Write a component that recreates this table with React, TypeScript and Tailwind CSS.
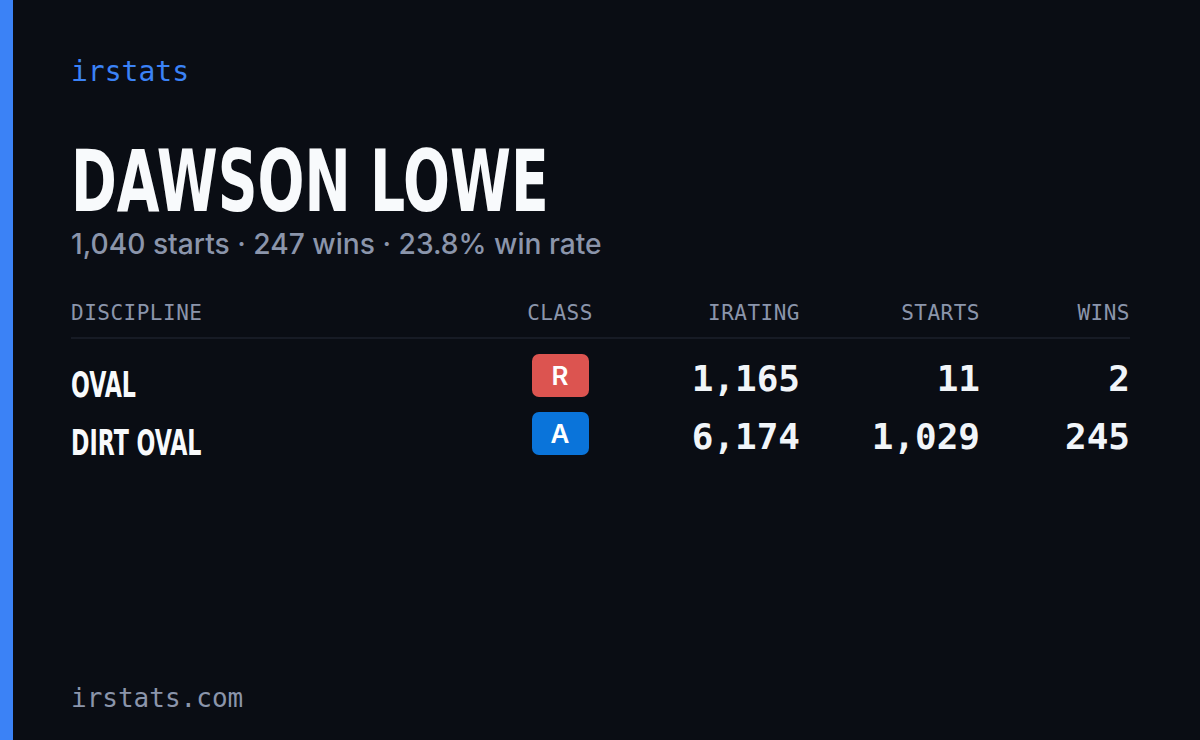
const rows = [
  { discipline: "OVAL", cls: "R", irating: "1,165", starts: "11", wins: "2" },
  { discipline: "DIRT OVAL", cls: "A", irating: "6,174", starts: "1,029", wins: "245" },
];

const mono = "font-['DejaVu_Sans_Mono','Liberation_Mono',monospace]";
const condensed = "font-['DejaVu_Sans_Condensed','DejaVu_Sans',sans-serif]";

function ClassBadge({ cls }: { cls: string }) {
  const color = cls === "R" ? "bg-[#dc5450]" : "bg-[#0a74da]";
  return (
    <div
      className={`flex h-[43px] w-[57px] items-center justify-center rounded-[7px] ${color} font-['Inter',sans-serif] text-[26px] font-semibold text-white`}
    >
      {cls}
    </div>
  );
}

export default function App() {
  return (
    <div className="flex h-[740px] w-[1200px] bg-[#0a0d14] text-white">
      {/* accent bar */}
      <div className="w-[13px] bg-[#3b82f6]" />

      <div className="flex flex-1 flex-col pl-[58px] pr-[70px]">
        <div className={`mt-[56px] ${mono} text-[28px] leading-[32px] text-[#3b82f6]`}>irstats</div>

        <h1
          className={`mt-[53px] origin-left scale-x-[0.714] whitespace-nowrap ${condensed} text-[86px] font-bold leading-[80px] text-[#f8fafc]`}
        >
          DAWSON LOWE
        </h1>
        <p className="mt-[5px] font-['Inter',sans-serif] text-[28.2px] font-medium leading-[36px] text-[#8b95ab]">
          1,040 starts · 247 wins · 23.8% win rate
        </p>

        {/* таблица дисциплин */}
        <div className="mt-[37px]">
          <div
            className={`grid grid-cols-[439px_100px_190px_180px_150px] border-b-2 border-[#171b25] pb-[10px] ${mono} text-[21px] leading-[28px] tracking-[0.5px] text-[#8b95ab]`}
          >
            <div>DISCIPLINE</div>
            <div className="text-center">CLASS</div>
            <div className="text-right">IRATING</div>
            <div className="text-right">STARTS</div>
            <div className="text-right">WINS</div>
          </div>

          <div className="pt-[5px]">
            {rows.map((r) => (
              <div key={r.discipline} className="grid h-[58px] grid-cols-[439px_100px_190px_180px_150px] items-start">
                <div
                  className={`mt-[21px] origin-left scale-x-[0.685] whitespace-nowrap ${condensed} text-[36px] font-bold leading-[40px] text-[#f8fafc]`}
                >
                  {r.discipline}
                </div>
                <div className="mt-[10px] flex justify-center">
                  <ClassBadge cls={r.cls} />
                </div>
                <div className={`mt-[15px] text-right ${mono} text-[36px] font-bold leading-[40px] text-[#f1f5f9]`}>{r.irating}</div>
                <div className={`mt-[15px] text-right ${mono} text-[36px] font-bold leading-[40px] text-[#f1f5f9]`}>{r.starts}</div>
                <div className={`mt-[15px] text-right ${mono} text-[36px] font-bold leading-[40px] text-[#f1f5f9]`}>{r.wins}</div>
              </div>
            ))}
          </div>
        </div>

        <div className={`mt-auto mb-[26px] ${mono} text-[26px] leading-[32px] text-[#8b95ab]`}>irstats.com</div>
      </div>
    </div>
  );
}
